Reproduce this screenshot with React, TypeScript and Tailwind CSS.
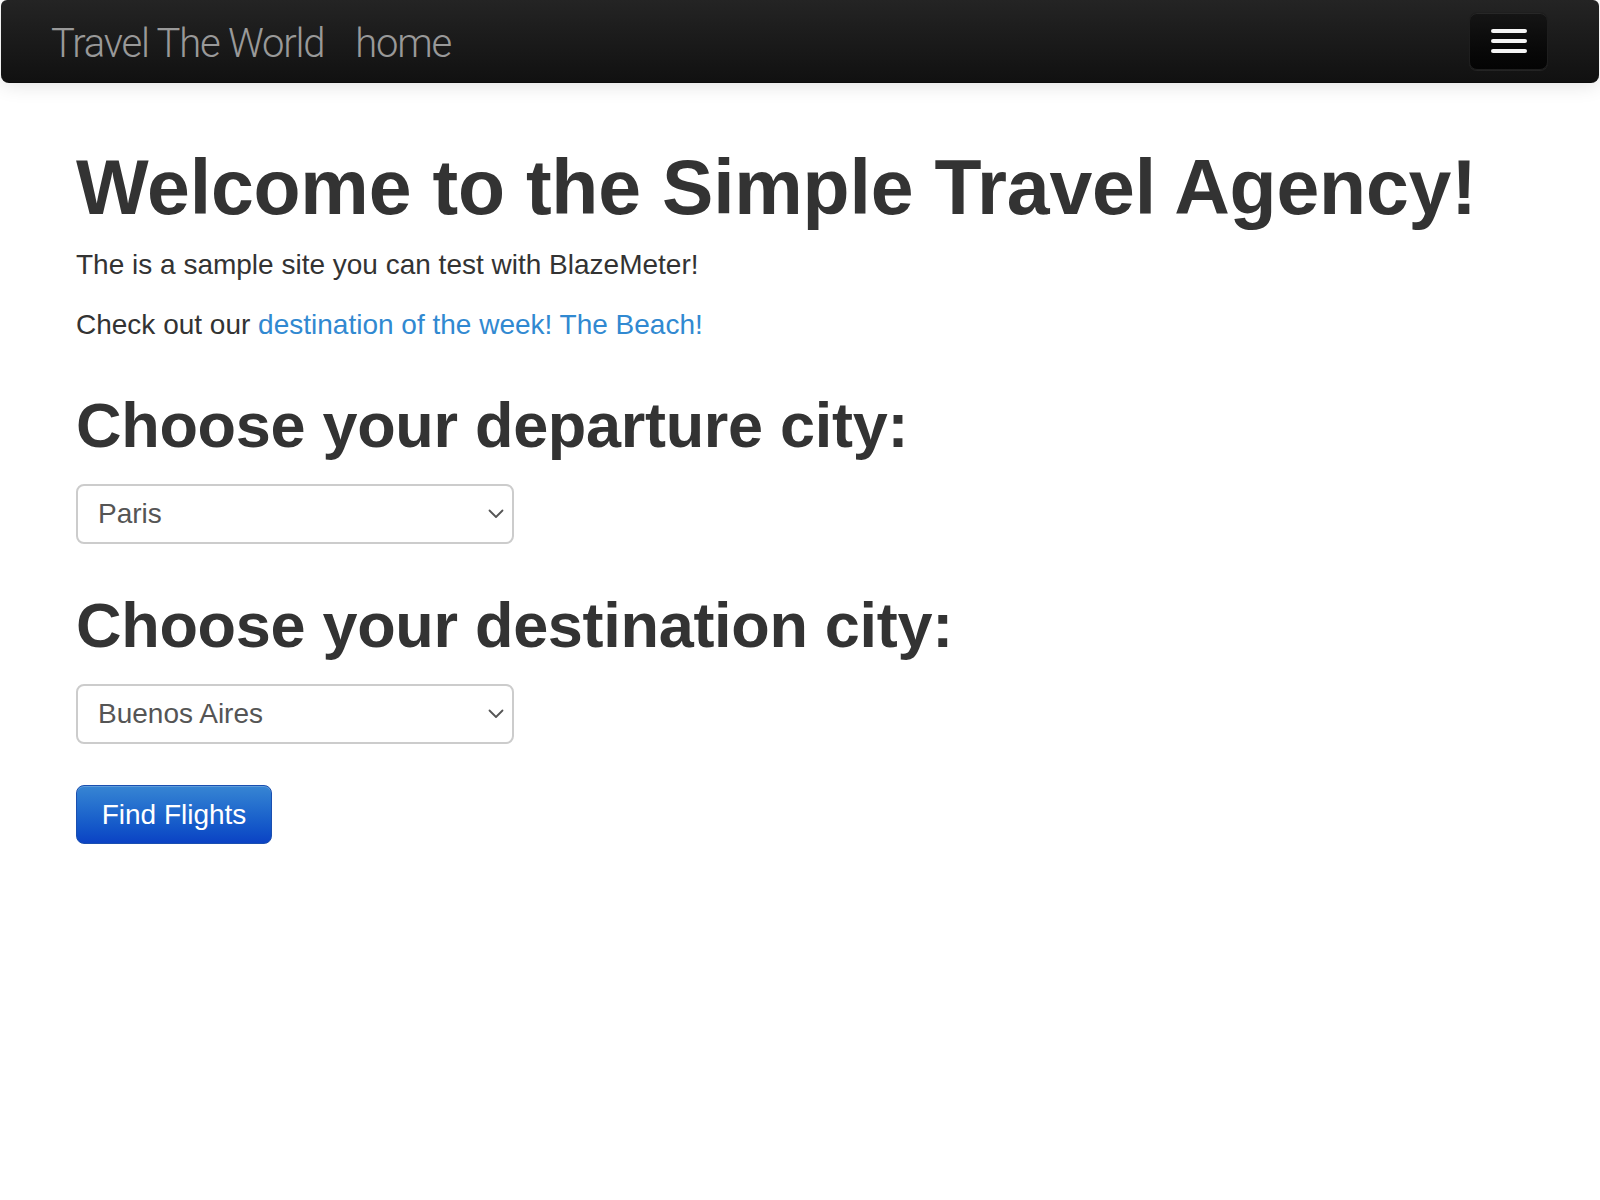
import React from "react";

function Chevron() {
  return (
    <svg width="16" height="10" viewBox="0 0 16 10" className="absolute right-[8px] top-1/2 -translate-y-1/2 pointer-events-none">
      <path d="M1.5 1.5 L8 8 L14.5 1.5" fill="none" stroke="#555" strokeWidth="1.8" strokeLinecap="round" strokeLinejoin="round" />
    </svg>
  );
}

function Select({ value }: { value: string }) {
  return (
    <div className="relative w-[438px] h-[60px] rounded-[8px] border-2 border-[#cccccc] bg-white flex items-center pl-[20px] text-[28px] text-[#555555]">
      <span>{value}</span>
      <Chevron />
    </div>
  );
}

export default function App() {
  return (
    <div className="min-h-[1200px] bg-white text-[#333333]" style={{ fontFamily: '"Liberation Sans", Arial, sans-serif' }}>
      <div className="px-[1px]">
        <div className="h-[83px] rounded-b-[8px] rounded-t-[6px] bg-gradient-to-b from-[#242424] to-[#111111] border-b border-[#0c0c0c] shadow-[0_2px_20px_rgba(0,0,0,0.12)] flex items-center justify-between pl-[50px] pr-[51px]">
          <div className="flex items-center text-[#999999] text-[40px] font-light tracking-[-1.2px] pt-[5px]" style={{ fontFamily: 'Roboto, "Liberation Sans", sans-serif' }}>
            <span>Travel The World</span>
            <span className="ml-[31px]">home</span>
          </div>
          <div className="w-[79px] h-[58px] rounded-[8px] bg-gradient-to-b from-[#151515] to-[#040404] border border-[#1e1e1e] shadow-[inset_0_1px_0_rgba(255,255,255,0.08),0_1px_0_rgba(255,255,255,0.07)] flex flex-col items-center justify-center gap-[6px]">
            <span className="block w-[36px] h-[4px] rounded-[2px] bg-[#f5f5f5]" />
            <span className="block w-[36px] h-[4px] rounded-[2px] bg-[#f5f5f5]" />
            <span className="block w-[36px] h-[4px] rounded-[2px] bg-[#f5f5f5]" />
          </div>
        </div>
      </div>
      <div className="pl-[76px] pt-[64px]">
        <h1 className="text-[77px] leading-[80px] font-bold tracking-[-0.2px] mb-[18px]">Welcome to the Simple Travel Agency!</h1>
        <p className="text-[28px] leading-[40px] mb-[20px]">The is a sample site you can test with BlazeMeter!</p>
        <p className="text-[28px] leading-[40px]">
          Check out our <a className="text-[#3189d1]">destination of the week! The Beach!</a>
        </p>
        <h2 className="text-[63px] leading-[80px] font-bold tracking-[-0.3px] mt-[40px] mb-[19px]">Choose your departure city:</h2>
        <Select value="Paris" />
        <h2 className="text-[63px] leading-[80px] font-bold tracking-[-0.3px] mt-[41px] mb-[19px]">Choose your destination city:</h2>
        <Select value="Buenos Aires" />
        <button className="mt-[41px] w-[196px] h-[59px] rounded-[8px] border border-[#1a4fb0] bg-gradient-to-b from-[#3785d3] to-[#0c42c4] text-white text-[28px] shadow-[inset_0_1px_0_rgba(255,255,255,0.2)] flex items-center justify-center">
          Find Flights
        </button>
      </div>
    </div>
  );
}
